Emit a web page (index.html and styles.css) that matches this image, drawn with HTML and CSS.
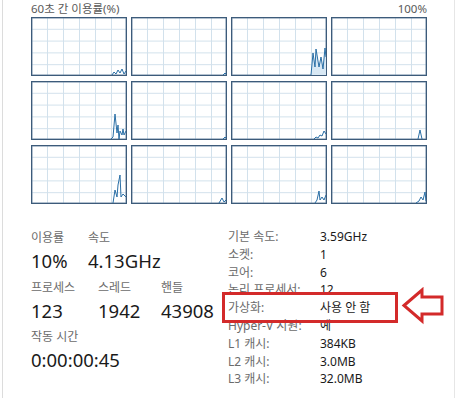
FILE: index.html
```html
<!DOCTYPE html>
<html lang="ko">
<head>
<meta charset="utf-8">
<link rel="stylesheet" href="styles.css">
</head>
<body>
<div class="panel">
  <div class="top">
    <div class="head"><span>60초 간 이용률(%)</span><span>100%</span></div>
    <div class="cores">
      <div class="cell"><svg viewBox="0 0 96 59"><polyline points="81,58 83,55 85,57 87,53 89,56 91,52 93,57 95,54"/></svg></div>
      <div class="cell"><svg viewBox="0 0 96 59"><polyline points="92,58 94,56 95,57"/></svg></div>
      <div class="cell"><svg viewBox="0 0 96 59"><polygon class="area" points="80,58 82,36 84,50 85,32 88,50 90,40 92,52 94,31 95,40 95,58"/><polyline points="80,58 82,36 84,50 85,32 88,50 90,40 92,52 94,31 95,40"/></svg></div>
      <div class="cell"><svg viewBox="0 0 96 59"></svg></div>
      <div class="cell"><svg viewBox="0 0 96 59"><polyline points="80,58 82,56 84,33 86,52 87,44 88,58 89,50 91,54 92,48 93,54 95,50"/></svg></div>
      <div class="cell"><svg viewBox="0 0 96 59"><polyline points="92,58 94,56 95,57"/></svg></div>
      <div class="cell"><svg viewBox="0 0 96 59"><polyline points="83,58 85,56 87,57 89,54 91,55 93,50 95,53"/></svg></div>
      <div class="cell"><svg viewBox="0 0 96 59"><polyline points="87,58 89,49 91,58"/></svg></div>
      <div class="cell"><svg viewBox="0 0 96 59"><polyline points="82,58 84,45 86,52 87,40 89,30 90,52 92,49 95,52"/></svg></div>
      <div class="cell"><svg viewBox="0 0 96 59"><polyline points="88,58 91,53 93,57 95,55"/></svg></div>
      <div class="cell"><svg viewBox="0 0 96 59"><polyline points="84,58 86,55 88,46 89,55 91,52 93,55 95,50"/></svg></div>
      <div class="cell"><svg viewBox="0 0 96 59"><polyline points="85,58 88,56 90,52 92,55 94,47 95,56"/></svg></div>
    </div>
  </div>

  <div class="stats">
    <div class="left">
      <div class="row">
        <div class="stat w57"><div class="lbl">이용률</div><div class="val">10%</div></div>
        <div class="stat"><div class="lbl">속도</div><div class="val">4.13GHz</div></div>
      </div>
      <div class="row">
        <div class="stat w67"><div class="lbl">프로세스</div><div class="val">123</div></div>
        <div class="stat w63"><div class="lbl">스레드</div><div class="val">1942</div></div>
        <div class="stat"><div class="lbl">핸들</div><div class="val">43908</div></div>
      </div>
      <div class="row">
        <div class="stat"><div class="lbl">작동 시간</div><div class="val">0:00:00:45</div></div>
      </div>
    </div>
    <dl class="right">
      <div class="kv"><dt>기본 속도:</dt><dd>3.59GHz</dd></div>
      <div class="kv"><dt>소켓:</dt><dd>1</dd></div>
      <div class="kv"><dt>코어:</dt><dd>6</dd></div>
      <div class="kv"><dt>논리 프로세서:</dt><dd>12</dd></div>
      <div class="kv"><dt>가상화:</dt><dd>사용 안 함</dd></div>
      <div class="kv"><dt>Hyper-V 지원:</dt><dd>예</dd></div>
      <div class="kv"><dt>L1 캐시:</dt><dd>384KB</dd></div>
      <div class="kv"><dt>L2 캐시:</dt><dd>3.0MB</dd></div>
      <div class="kv"><dt>L3 캐시:</dt><dd>32.0MB</dd></div>
    </dl>
  </div>

  <div class="highlight"></div>
  <svg class="arrow" viewBox="0 0 46 38" width="46" height="38">
    <polygon points="3,18.5 21,3 21,10 41,10 41,27 21,27 21,34"/>
  </svg>
</div>
</body>
</html>
```

FILE: styles.css
```css
html, body {
  margin: 0;
  padding: 0;
  background: #ffffff;
}

body {
  font-family: "Noto Sans", "Noto Sans CJK KR", sans-serif;
  color: #1a1a1a;
  width: 461px;
  height: 398px;
  overflow: hidden;
}

.panel {
  position: relative;
  width: 453px;
  height: 398px;
  margin-left: 2px;
  border-left: 1px solid #dcdcdc;
  border-right: 1px solid #e6e6e6;
  box-sizing: border-box;
}

.top {
  padding-left: 28px;
  width: 396px;
}

.head {
  display: flex;
  justify-content: space-between;
  height: 17px;
  font-size: 11.5px;
  line-height: 17px;
  color: #5a5a5a;
}

.cores {
  display: grid;
  grid-template-columns: repeat(4, 96px);
  grid-template-rows: repeat(3, 59px);
  column-gap: 4px;
  row-gap: 5px;
}

.cell {
  border: 1px solid #3d5b7a;
  box-shadow: inset 0 0 0 0.5px #6b86a1;
  background-color: #fff;
  background-image:
    linear-gradient(to right, #d2e1ec 1px, transparent 1px),
    linear-gradient(to bottom, #d2e1ec 1px, transparent 1px);
  background-size: 16px 11.8px;
  background-position: -1px -1px;
  position: relative;
  overflow: hidden;
}

.cell svg {
  position: absolute;
  left: -1px;
  top: -1px;
  width: 96px;
  height: 59px;
}

.cell polyline {
  fill: none;
  stroke: #2a6fa6;
  stroke-width: 1;
  stroke-linejoin: round;
}

.cell .area {
  fill: #d8e8f4;
  stroke: none;
}

.stats {
  display: flex;
  align-items: flex-start;
  margin-top: 24px;
  padding-left: 28px;
}

.left {
  width: 197px;
  padding-top: 2px;
}

.row {
  display: flex;
  margin-bottom: 6.5px;
}

.w57 { width: 57px; }
.w67 { width: 67px; }
.w63 { width: 63px; }

.lbl {
  font-size: 12px;
  line-height: 16px;
  color: #6b6b6b;
  margin-bottom: 3px;
}

.val {
  font-size: 18.5px;
  line-height: 24px;
  color: #1a1a1a;
}

.right {
  margin: 0;
  font-size: 12px;
  line-height: 17.8px;
}

.kv {
  display: flex;
}

.kv dt {
  width: 92px;
  color: #6b6b6b;
}

.kv dd {
  margin: 0;
  color: #1a1a1a;
}

.highlight {
  position: absolute;
  left: 219px;
  top: 292px;
  width: 176px;
  height: 31px;
  border: 3px solid #d32a2a;
  box-sizing: border-box;
}

.arrow {
  position: absolute;
  left: 398px;
  top: 287px;
}

.arrow polygon {
  fill: #ffffff;
  stroke: #d32a2a;
  stroke-width: 3;
  stroke-linejoin: miter;
}
```
